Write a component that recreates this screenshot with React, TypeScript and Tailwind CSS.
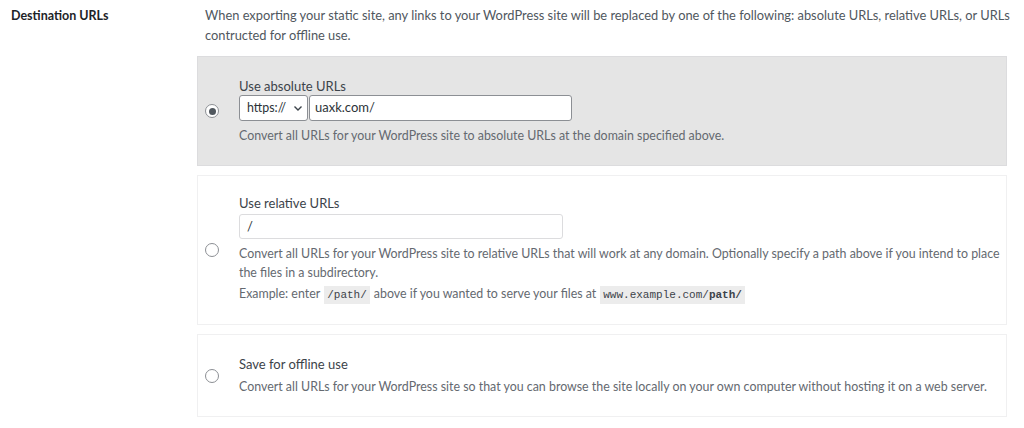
import React from 'react';

const Radio: React.FC<{ checked?: boolean }> = ({ checked }) => (
	<span className="flex h-[14px] w-[14px] shrink-0 items-center justify-center rounded-full border border-[#8c8f94] bg-white">
		{checked && <span className="h-[7px] w-[7px] rounded-full bg-[#50575e]" />}
	</span>
);

const Code: React.FC<{ children: React.ReactNode }> = ({ children }) => (
	<code className="mx-[4px] inline-block bg-[#ececec] px-[3px] font-['Liberation_Mono',monospace] text-[11px] leading-[18px] text-[#3c434a]">
		{children}
	</code>
);

export default function App() {
	return (
		<div className="flex h-[428px] w-[1024px] bg-white font-['Lato',sans-serif] text-[12.4px] leading-[19.5px] text-[#3c434a]">
			<div className="w-[197px] shrink-0 pl-[11px] pt-[6px] text-[12.5px] font-bold text-[#1d2327]">
				Destination URLs
			</div>

			<div className="flex w-[810px] shrink-0 flex-col">
				<p className="w-[820px] pl-2 pt-[6px] text-[12.85px] text-[#50575e]">
					When exporting your static site, any links to your WordPress site will be replaced by one of the following: absolute URLs, relative URLs, or URLs contructed for offline use.
				</p>

				{/* absolute */}
				<div className="mt-[11px] flex h-[110px] items-center border border-[#dcdcde] bg-[#e5e5e5] pl-[7px]">
					<Radio checked />
					<div className="ml-[20px] flex flex-col">
						<label className="text-[13px]">Use absolute URLs</label>
						<div className="-mt-px flex h-[26px] gap-px text-[13px]">
							<div className="flex w-[69px] items-center justify-between rounded-[3px] border border-[#8c8f94] bg-white pl-[7px] pr-[4px] text-[12.4px] text-[#2c3338]">
								<span>https://</span>
								<svg width="10" height="10" viewBox="0 0 10 10" fill="none" stroke="#3c434a" strokeWidth="1.4">
									<path d="M1.5 3.5 L5 7 L8.5 3.5" />
								</svg>
							</div>
							<div className="flex w-[263px] items-center rounded-[3px] border border-[#8c8f94] bg-white pl-[5px] text-[#2c3338]">
								uaxk.com/
							</div>
						</div>
						<p className="mt-[5px] text-[#646970]">
							Convert all URLs for your WordPress site to absolute URLs at the domain specified above.
						</p>
					</div>
				</div>

				{/* relative */}
				<div className="mt-[9px] flex h-[150px] items-center border border-[#f0f0f1] bg-white pl-[7px]">
					<Radio />
					<div className="ml-[20px] flex w-[765px] flex-col">
						<label className="-mt-[2px] text-[13px]">Use relative URLs</label>
						<div className="flex h-[25px] w-[324px] items-center rounded-[3px] border border-[#dcdcde] bg-white pl-[7px] text-[13px] text-[#2c3338]">
							/
						</div>
						<p className="mt-[5px] text-[#646970]">
							Convert all URLs for your WordPress site to relative URLs that will work at any domain. Optionally specify a path above if you intend to place the files in a subdirectory.
						</p>
						<p className="mt-px text-[#646970]">
							Example: enter<Code>/path/</Code>above if you wanted to serve your files at<Code>www.example.com/<b>path/</b></Code>
						</p>
					</div>
				</div>

				{/* offline */}
				<div className="mt-[9px] flex h-[83px] items-center border border-[#f0f0f1] bg-white pl-[7px]">
					<Radio />
					<div className="ml-[20px] flex flex-col">
						<label className="text-[13px]">Save for offline use</label>
						<p className="mt-[2px] text-[#646970]">
							Convert all URLs for your WordPress site so that you can browse the site locally on your own computer without hosting it on a web server.
						</p>
					</div>
				</div>
			</div>
		</div>
	);
}
